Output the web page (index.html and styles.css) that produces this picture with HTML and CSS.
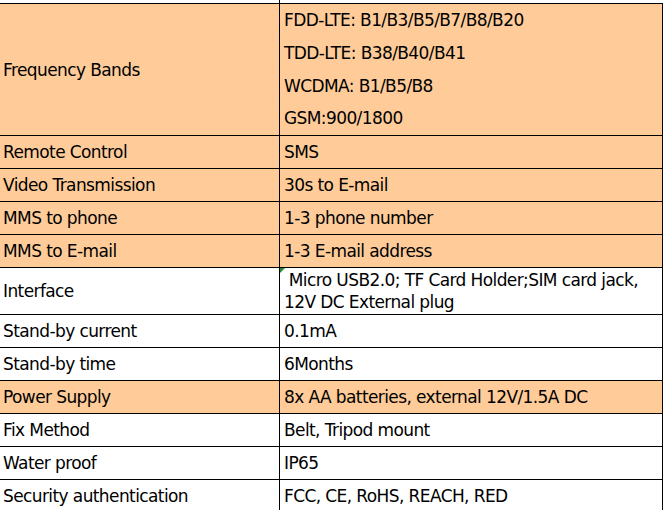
FILE: index.html
```html
<!DOCTYPE html>
<html>
<head>
<meta charset="utf-8">
<link rel="stylesheet" href="styles.css">
</head>
<body>
<div class="sheet">
  <div class="stub"><div class="stub-key"></div><div class="stub-val"></div></div>
  <div class="rows">
    <div class="row peach tall">
      <div class="key">Frequency Bands</div>
      <div class="val multi">
        <div class="band">FDD-LTE: B1/B3/B5/B7/B8/B20</div>
        <div class="band">TDD-LTE: B38/B40/B41</div>
        <div class="band">WCDMA: B1/B5/B8</div>
        <div class="band">GSM:900/1800</div>
      </div>
    </div>
    <div class="row peach"><div class="key">Remote Control</div><div class="val">SMS</div></div>
    <div class="row peach"><div class="key">Video Transmission</div><div class="val">30s to E-mail</div></div>
    <div class="row peach"><div class="key">MMS to phone</div><div class="val">1-3 phone number</div></div>
    <div class="row peach"><div class="key">MMS to E-mail</div><div class="val">1-3 E-mail address</div></div>
    <div class="row white two">
      <div class="key">Interface</div>
      <div class="val wrap"><span class="flag"></span>&nbsp;Micro USB2.0; TF Card Holder;SIM card jack,<br>12V DC External plug</div>
    </div>
    <div class="row white"><div class="key">Stand-by current</div><div class="val">0.1mA</div></div>
    <div class="row white"><div class="key">Stand-by time</div><div class="val">6Months</div></div>
    <div class="row peach"><div class="key">Power Supply</div><div class="val">8x AA batteries, external 12V/1.5A DC</div></div>
    <div class="row white"><div class="key">Fix Method</div><div class="val">Belt, Tripod mount</div></div>
    <div class="row white"><div class="key">Water proof</div><div class="val">IP65</div></div>
    <div class="row white"><div class="key">Security authentication</div><div class="val">FCC, CE, RoHS, REACH, RED</div></div>
  </div>
</div>
</body>
</html>
```
FILE: styles.css
```css
html, body {
  margin: 0;
  padding: 0;
  background: #ffffff;
}
body {
  font-family: "DejaVu Sans", Verdana, sans-serif;
  font-size: 17px;
  letter-spacing: -0.6px;
  color: #000000;
}
.sheet {
  width: 663px;
  display: flex;
  flex-direction: column;
}
.stub {
  display: grid;
  grid-template-columns: 280px 1fr;
  height: 3px;
}
.stub-key {
  border-right: 1px solid #000;
}
.rows {
  display: flex;
  flex-direction: column;
  border-top: 1px solid #000;
}
.row {
  display: grid;
  grid-template-columns: 280px 1fr;
  border-right: 1px solid #000;
  border-bottom: 1px solid #000;
  height: 33px;
  box-sizing: border-box;
}
.row.tall {
  height: 132px;
}
.row.two {
  height: 47px;
}
.peach { background: #ffcc99; }
.white { background: #ffffff; }
.key {
  border-right: 1px solid #000;
  padding-left: 3px;
  display: flex;
  align-items: center;
  white-space: nowrap;
}
.val {
  padding-left: 4px;
  display: flex;
  align-items: center;
  white-space: nowrap;
  position: relative;
}
.val.multi {
  flex-direction: column;
  align-items: flex-start;
  justify-content: flex-start;
}
.band {
  height: 32.75px;
  line-height: 32.75px;
}
.val.wrap {
  display: block;
  line-height: 22px;
  padding-top: 1px;
}
.flag {
  position: absolute;
  left: 0;
  top: 0;
  width: 0;
  height: 0;
  border-top: 5px solid #1f8a2e;
  border-right: 5px solid transparent;
}
```
